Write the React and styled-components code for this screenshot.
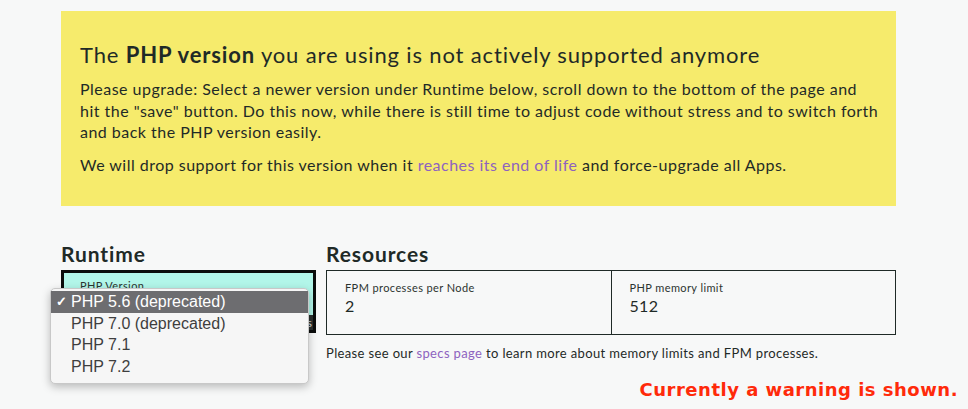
import React from 'react';
import styled, { createGlobalStyle } from 'styled-components';

const GlobalStyle = createGlobalStyle`
  html, body {
    margin: 0;
    padding: 0;
    background: #f7f8f8;
    font-family: Lato, "Open Sans", sans-serif;
    color: #1f2a27;
  }
`;

const Page = styled.div`
  width: 835px;
  padding: 11px 0 0 61px;
  height: 398px;
  position: relative;
`;

const Banner = styled.div`
  background: #f6eb6c;
  padding: 30px 19px 29px 19px;
  height: 195px;
  box-sizing: border-box;
  h2 {
    margin: 0 0 9px;
    font-size: 22px;
    font-weight: 400;
    letter-spacing: 0.85px;
    line-height: 28px;
  }
  b {
    font-weight: 700;
  }
  p {
    margin: 0 0 11px;
    font-size: 16px;
    letter-spacing: 0.48px;
    line-height: 21.5px;
    white-space: nowrap;
  }
`;

const Link = styled.a`
  color: #8e63bf;
  text-decoration: none;
`;

const Sections = styled.div`
  display: flex;
  gap: 10px;
  margin-top: 36px;
`;

const Section = styled.div`
  width: ${p => p.$width}px;
  position: relative;
  h3 {
    margin: 0 0 4px;
    font-size: 21px;
    font-weight: 700;
    letter-spacing: 0.9px;
    line-height: 24px;
  }
`;

const RuntimeBox = styled.div`
  height: 63px;
  box-sizing: border-box;
  border: 3px solid #0b0d0c;
  background: #b2f6e9;
  display: flex;
  flex-direction: column;
  justify-content: space-between;
`;

const BoxLabel = styled.div`
  font-size: 11px;
  letter-spacing: 0.4px;
  padding: ${p => p.$pad};
  color: #2c3430;
`;

const SelectStrip = styled.div`
  background: #2b302f;
  color: #d8dcda;
  font-size: 12px;
  text-align: right;
  padding: 0 1px;
  height: 15px;
  line-height: 15px;
`;

const ResourceBox = styled.div`
  display: flex;
  height: 65px;
  box-sizing: border-box;
  border: 1px solid #1f2a27;
`;

const Cell = styled.div`
  flex: 1;
  padding: 10px 18px;
  & + & {
    border-left: 1px solid #1f2a27;
  }
`;

const Value = styled.div`
  font-size: 16px;
  margin-top: 2px;
  letter-spacing: 0.3px;
`;

const Note = styled.p`
  margin: 10px 0 0;
  font-size: 13px;
  letter-spacing: 0.36px;
`;

const Dropdown = styled.ul`
  position: absolute;
  left: -11px;
  top: 46px;
  width: 257px;
  margin: 0;
  padding: 2px 0 6px;
  list-style: none;
  background: #f6f6f6;
  border: 1px solid #c8c8c8;
  border-radius: 5px;
  box-shadow: 0 3px 8px rgba(0, 0, 0, 0.25);
  font-family: "Liberation Sans", Arial, sans-serif;
  font-size: 16px;
  z-index: 2;
`;

const Option = styled.li`
  height: 21.5px;
  line-height: 21.5px;
  padding-left: 20px;
  position: relative;
  color: ${p => (p.$selected ? '#fff' : '#3e3e3e')};
  background: ${p => (p.$selected ? '#6d6d70' : 'transparent')};
  &::before {
    content: ${p => (p.$selected ? '"✓"' : '""')};
    position: absolute;
    left: 5px;
    font-size: 13px;
    font-weight: 700;
  }
`;

const Warning = styled.div`
  position: absolute;
  right: -62px;
  bottom: 9px;
  color: #ff2a0a;
  font-family: "Comic Sans MS", "DejaVu Sans", cursive;
  font-weight: 700;
  font-size: 18px;
  letter-spacing: 0.5px;
`;

const options = [
  { label: 'PHP 5.6 (deprecated)', selected: true },
  { label: 'PHP 7.0 (deprecated)' },
  { label: 'PHP 7.1' },
  { label: 'PHP 7.2' },
];

export default function App() {
  return (
    <>
      <GlobalStyle />
      <Page>
        <Banner>
          <h2>The <b>PHP version</b> you are using is not actively supported anymore</h2>
          <p>
            Please upgrade: Select a newer version under Runtime below, scroll down to the bottom of the page and<br />
            hit the "save" button. Do this now, while there is still time to adjust code without stress and to switch forth<br />
            and back the PHP version easily.
          </p>
          <p>
            We will drop support for this version when it <Link href="#">reaches its end of life</Link> and force-upgrade all Apps.
          </p>
        </Banner>
        <Sections>
          <Section $width={255}>
            <h3>Runtime</h3>
            <RuntimeBox>
              <BoxLabel $pad="6px 0 0 16px">PHP Version</BoxLabel>
              <SelectStrip>s</SelectStrip>
            </RuntimeBox>
            <Dropdown>
              {options.map(o => (
                <Option key={o.label} $selected={o.selected}>{o.label}</Option>
              ))}
            </Dropdown>
          </Section>
          <Section $width={570}>
            <h3>Resources</h3>
            <ResourceBox>
              <Cell>
                <BoxLabel $pad="0">FPM processes per Node</BoxLabel>
                <Value>2</Value>
              </Cell>
              <Cell>
                <BoxLabel $pad="0">PHP memory limit</BoxLabel>
                <Value>512</Value>
              </Cell>
            </ResourceBox>
            <Note>
              Please see our <Link href="#">specs page</Link> to learn more about memory limits and FPM processes.
            </Note>
          </Section>
        </Sections>
        <Warning>Currently a warning is shown.</Warning>
      </Page>
    </>
  );
}
